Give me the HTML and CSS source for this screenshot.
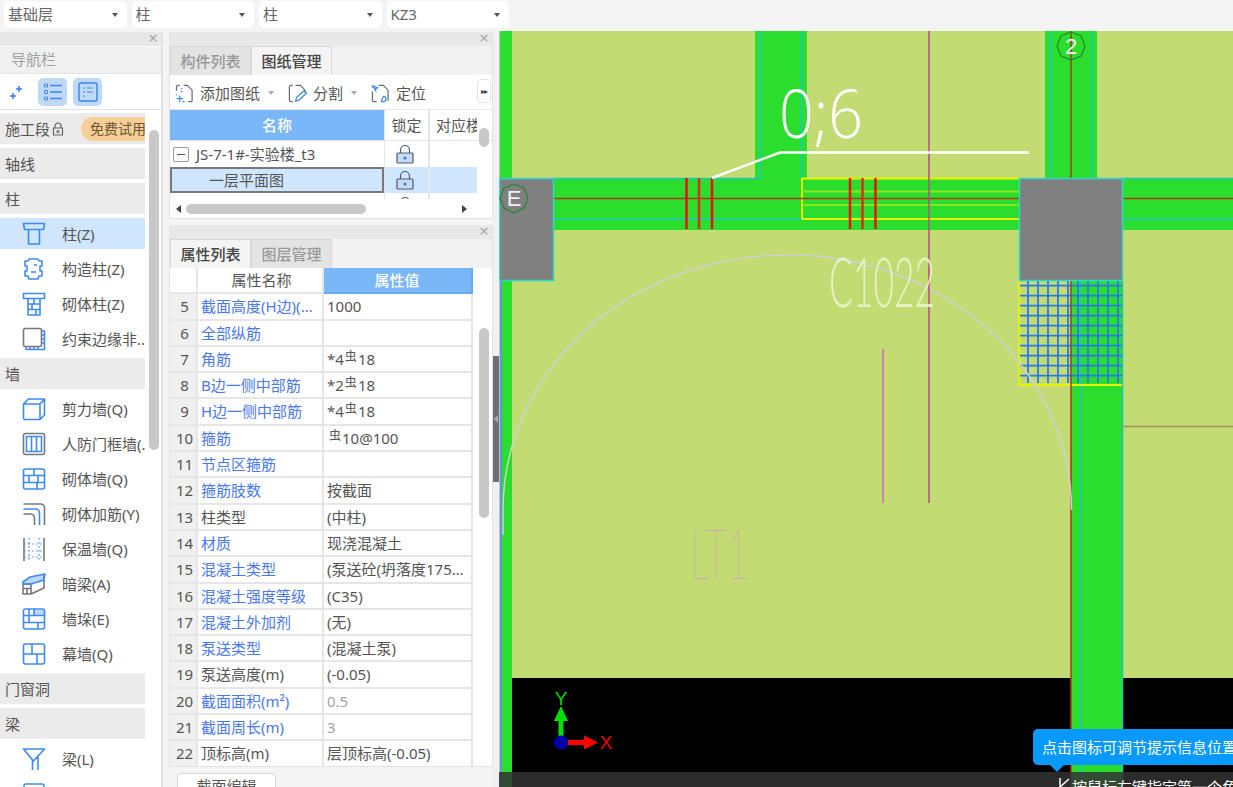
FILE: index.html
```html
<!DOCTYPE html>
<html lang="zh-CN">
<head>
<meta charset="utf-8">
<title>柱</title>
<link rel="stylesheet" href="styles.css">
</head>
<body>
<div class="app">
  <header class="topbar">
    <div class="select s1"><span>基础层</span><i class="caret"></i></div>
    <div class="select s1"><span>柱</span><i class="caret"></i></div>
    <div class="select s1"><span>柱</span><i class="caret"></i></div>
    <div class="select s1"><span>KZ3</span><i class="caret"></i></div>
  </header>
  <main class="main">
    <aside class="nav">
      <div class="strip"><span class="close">×</span></div>
      <div class="nav-title">导航栏</div>
      <div class="nav-tools">
        <svg class="tool-sparkle" viewBox="0 0 16 16"><path d="M10 2v6M7 5h6M4 9v6M1 12h6"/></svg>
        <span class="tool-btn"><svg viewBox="0 0 20 20"><path d="M7 3.500h12M7 10h12M7 16.500h12"/><path class="thin" d="M1.500 2h3v3h-3zM1.500 8.500h3v3h-3zM1.500 15h3v3h-3z"/></svg></span>
        <span class="tool-btn"><svg viewBox="0 0 20 20"><rect x="1" y="1" width="18" height="18" rx="2"/><path class="thin" d="M5 6h2M9 6h6M5 10h2M9 10h6M5 14h2"/></svg></span>
      </div>
      <div class="nav-scroll"></div>
      <div class="nav-list">
        <div class="sec">施工段<svg class="sec-lock" viewBox="0 0 12 14"><path d="M3 6V4a3 3 0 0 1 6 0v2M1.500 6h9v7h-9z"/><circle cx="6" cy="9.500" r="1"/></svg><span class="trial">免费试用</span></div>
        <div class="sec">轴线</div>
        <div class="sec">柱</div>
        <div class="item on"><svg class="ic" viewBox="0 0 24 24"><path d="M1.500 1.500h21l-1 6h-19zM6.500 7.500V22h11V7.500"/></svg>柱(Z)</div>
        <div class="item"><svg class="ic" viewBox="0 0 24 24"><path d="M7 2h9l1 2h3v5h-2v5h2v5h-3l-1 3H7l-1-3H3v-5h2V9H3V4h3zM12 8h3M9 15h5"/></svg>构造柱(Z)</div>
        <div class="item"><svg class="ic" viewBox="0 0 24 24"><path d="M1.500 1.500h21v5h-21zM6 6.500V23h12V6.500M6 12h12M6 17.500h12M12 6.500V12M10 12v5.500M14 17.500V23"/></svg>砌体柱(Z)</div>
        <div class="item"><svg class="ic" viewBox="0 0 24 24"><rect class="gray" x="1.500" y="1.500" width="18" height="18" rx="2"/><path d="M20 4h2.500v18.500H4V20M20 8h2M20 12h2M20 16h2M8 20v2M12 20v2M16 20v2"/></svg>约束边缘非..</div>
        <div class="sec">墙</div>
        <div class="item"><svg class="ic" viewBox="0 0 24 24"><path d="M1.500 7h16.500v15.500H2.500l-1-1zM1.500 7l5-5h16v16l-4.500 4.500M18 7l4.500-5"/></svg>剪力墙(Q)</div>
        <div class="item"><svg class="ic" viewBox="0 0 24 24"><rect class="gray" x="1.500" y="1.500" width="21" height="21" rx="2"/><path d="M4.500 4.500h15v15h-15zM9.500 4.500v15M14.500 4.500v15"/></svg>人防门框墙(.</div>
        <div class="item"><svg class="ic" viewBox="0 0 24 24"><rect x="1.500" y="2" width="21" height="20" rx="2"/><path d="M1.500 8.500h21M1.500 15.500h21M12 2v6.500M7 8.500v7M16 8.500v7M15 15.500V22"/></svg>砌体墙(Q)</div>
        <div class="item"><svg class="ic" viewBox="0 0 24 24"><path class="gray" d="M1.500 2h17a4 4 0 0 1 4 4v17M1.500 12h7a4 4 0 0 1 4 4v7"/><path d="M1.500 7h12a4 4 0 0 1 4 4v12"/></svg>砌体加筋(Y)</div>
        <div class="item"><svg class="ic" viewBox="0 0 24 24"><path class="gray" d="M2 1v23M22 1v23"/><path class="dash" d="M7 1v23M17 1v23M2 7h20M2 14h20M2 20h20"/></svg>保温墙(Q)</div>
        <div class="item"><svg class="ic" viewBox="0 0 24 24"><path class="lightfill" d="M1 10l7-5 15-3-1 6-14 4H1z"/><path class="gray" d="M1 12h8v10H1zM1 16.500h8M5 16.500V22M9 22l13-6V2"/><path d="M1 10l7-5 15-3-1 6-13 4H1z"/></svg>暗梁(A)</div>
        <div class="item"><svg class="ic" viewBox="0 0 24 24"><path class="lightfill" d="M12 3h10v6H12z"/><rect x="1.500" y="2" width="21" height="20" rx="2"/><path d="M1.500 8.500h21M1.500 15.500h21M7 2v13.500M12 2v6.500M16 15.500V22"/></svg>墙垛(E)</div>
        <div class="item"><svg class="ic" viewBox="0 0 24 24"><rect x="1.500" y="2" width="21" height="20" rx="2"/><path d="M1.500 12h21M10 2v10M15 12v10"/></svg>幕墙(Q)</div>
        <div class="sec">门窗洞</div>
        <div class="sec">梁</div>
        <div class="item"><svg class="ic" viewBox="0 0 24 24"><path d="M1.500 2h21l-11 12zM16 8v15M1.500 2l9 11v10"/></svg>梁(L)</div>
        <div class="item"><svg class="ic" viewBox="0 0 24 24"><rect x="2" y="2" width="20" height="20" rx="2"/><path d="M2 8h20"/></svg>连梁(G)</div>
      </div>
    </aside>

    <section class="mid">
      <div class="panel panel-a">
        <div class="strip"><span class="close">×</span></div>
        <div class="tabs">
          <span class="tab off">构件列表</span><span class="tab cur">图纸管理</span>
        </div>
        <div class="toolbar">
          <svg class="tb-ic" viewBox="0 0 20 20"><path class="gray" d="M5 1.500H3a1.500 1.500 0 0 0-1.500 1.500v4M9 1.500h4l5 5v11a1 1 0 0 1-1 1h-3M1.500 11v1M8 18.500h2"/><path d="M5 12v7M1.500 15.500h7"/><path d="M6 5h2M6 8h2"/></svg>
          <span class="tb-label">添加图纸</span><i class="tb-caret"></i>
          <svg class="tb-ic" viewBox="0 0 20 20"><path class="gray" d="M5 1.500H3A1.500 1.500 0 0 0 1.500 3v14A1.500 1.500 0 0 0 3 18.500h2M8 1.500h5l5 5v3"/><path d="M8 18l1-4 8-7 2.500 2.500-8 7.500z"/></svg>
          <span class="tb-label">分割</span><i class="tb-caret"></i>
          <svg class="tb-ic" viewBox="0 0 20 20"><path class="gray" d="M1.500 8v9A1.500 1.500 0 0 0 3 18.500h3M8 1.500h5l5 5v11M1.500 4V3"/><path d="M2 2l5 2-2 1 0 2zM13 13a2.500 2.500 0 1 1 0 5.500h-2v-1z"/></svg>
          <span class="tb-label">定位</span>
          <span class="more">▸▸</span>
        </div>
        <div class="grid-a">
          <div class="ga-head">
            <span class="ga-name">名称</span><span class="ga-lock">锁定</span><span class="ga-floor">对应楼层</span>
          </div>
          <div class="ga-row">
            <div class="ga-cell"><span class="tree-box"></span>JS-7-1#-实验楼_t3</div>
            <div class="ga-lockcell"><svg class="lock" viewBox="0 0 18 20"><path class="shackle" d="M4.500 9V6a4.500 4.500 0 0 1 9 0v3"/><rect x="1" y="9" width="16" height="10" rx="1"/><circle cx="9" cy="14" r="1.600"/></svg></div>
            <div class="ga-blank"></div>
          </div>
          <div class="ga-row sel">
            <div class="ga-cell selcell">一层平面图</div>
            <div class="ga-lockcell"><svg class="lock" viewBox="0 0 18 20"><path class="shackle" d="M4.500 9V6a4.500 4.500 0 0 1 9 0v3"/><rect x="1" y="9" width="16" height="10" rx="1"/><circle cx="9" cy="14" r="1.600"/></svg></div>
            <div class="ga-blank"></div>
          </div>
          <div class="ga-row">
            <div class="ga-cell"></div>
            <div class="ga-lockcell"><svg class="lock" viewBox="0 0 18 20"><path class="shackle" d="M4.500 9V6a4.500 4.500 0 0 1 9 0v3"/><rect x="1" y="9" width="16" height="10" rx="1"/></svg></div>
            <div class="ga-blank"></div>
          </div>
          <div class="ga-vthumb"></div>
        </div>
        <div class="hscroll">
          <i class="arrow-l"></i><span class="hthumb"></span><i class="arrow-r"></i>
        </div>
      </div>

      <div class="panel panel-b">
        <div class="strip"><span class="close">×</span></div>
        <div class="tabs">
          <span class="tab cur">属性列表</span><span class="tab off">图层管理</span>
        </div>
        <div class="props">
          <div class="pr head"><span class="n"></span><span class="k">属性名称</span><span class="v">属性值</span></div>
          <div class="pr"><span class="n">5</span><span class="k link">截面高度(H边)(mm)</span><span class="v">1000</span></div>
          <div class="pr"><span class="n">6</span><span class="k link">全部纵筋</span><span class="v"></span></div>
          <div class="pr"><span class="n">7</span><span class="k link">角筋</span><span class="v">*4<sup class="steel">虫</sup>18</span></div>
          <div class="pr"><span class="n">8</span><span class="k link">B边一侧中部筋</span><span class="v">*2<sup class="steel">虫</sup>18</span></div>
          <div class="pr"><span class="n">9</span><span class="k link">H边一侧中部筋</span><span class="v">*4<sup class="steel">虫</sup>18</span></div>
          <div class="pr"><span class="n">10</span><span class="k link">箍筋</span><span class="v"><sup class="steel lead">虫</sup>10@100</span></div>
          <div class="pr"><span class="n">11</span><span class="k link">节点区箍筋</span><span class="v"></span></div>
          <div class="pr"><span class="n">12</span><span class="k link">箍筋肢数</span><span class="v">按截面</span></div>
          <div class="pr"><span class="n">13</span><span class="k">柱类型</span><span class="v">(中柱)</span></div>
          <div class="pr"><span class="n">14</span><span class="k link">材质</span><span class="v">现浇混凝土</span></div>
          <div class="pr"><span class="n">15</span><span class="k link">混凝土类型</span><span class="v">(泵送砼(坍落度175~190mm))</span></div>
          <div class="pr"><span class="n">16</span><span class="k link">混凝土强度等级</span><span class="v">(C35)</span></div>
          <div class="pr"><span class="n">17</span><span class="k link">混凝土外加剂</span><span class="v">(无)</span></div>
          <div class="pr"><span class="n">18</span><span class="k link">泵送类型</span><span class="v">(混凝土泵)</span></div>
          <div class="pr"><span class="n">19</span><span class="k">泵送高度(m)</span><span class="v">(-0.05)</span></div>
          <div class="pr"><span class="n">20</span><span class="k link">截面面积(m²)</span><span class="v muted">0.5</span></div>
          <div class="pr"><span class="n">21</span><span class="k link">截面周长(m)</span><span class="v muted">3</span></div>
          <div class="pr"><span class="n">22</span><span class="k">顶标高(m)</span><span class="v">层顶标高(-0.05)</span></div>
          <div class="props-thumb"></div>
        </div>
      </div>
      <div class="btn-row"><button class="btn">截面编辑</button></div>
    </section>

    <div class="splitter"><span class="grip"><i></i></span></div>

    <section class="canvas">
      <svg class="cad" viewBox="499 31 734 756" width="734" height="756">
        <rect x="499" y="31" width="734" height="756" fill="#c2dc73"/>
        <rect x="512" y="678" width="721" height="109" fill="#000"/>
        <!-- walls -->
        <g fill="#2bde2e">
          <rect x="499" y="31" width="13" height="756"/>
          <rect x="755" y="31" width="52" height="147"/>
          <rect x="553" y="178" width="466" height="52"/>
          <rect x="1045" y="31" width="52" height="147"/>
          <rect x="1122" y="178" width="111" height="52"/>
          <rect x="1071" y="281" width="51" height="506"/>
        </g>
        <rect x="499" y="31" width="1" height="756" fill="#c4c4c4"/>
        <path d="M501 281V787" stroke="#5a9ad0" stroke-width="2"/>
        <!-- wall edges -->
        <g fill="none" stroke="#1fc6c0" stroke-width="1.500">
          <path d="M553 178.500H760.500V31"/>
          <path d="M801.500 31V178"/>
          <path d="M553 219H802"/>
          <path d="M1050.500 31V178M1092 31V178"/>
          <path d="M1122 178.500H1233M1122 219.500H1233"/>
          <path d="M1081 281V787M1122.500 281V787"/>
        </g>
        <!-- hatch -->
        <g fill="none" stroke="#e8f200" stroke-width="2">
          <path d="M802 178.500H1019M802 219H1019M802 178V219"/>
          <path d="M802 191.500H1019M802 205H1019" stroke="#86e81c"/>
          <path d="M1019.500 281V385H1122"/>
        </g>
        <g stroke="#2a78f0" stroke-width="1.800">
          <path d="M1028 281V383M1038 281V383M1048 281V383M1058 281V383M1068 281V383M1078 281V383M1088 281V383M1098 281V383M1108 281V383M1118 281V383"/>
          <path d="M1020 285.700H1122M1020 295.700H1122M1020 305.700H1122M1020 315.700H1122M1020 325.700H1122M1020 335.700H1122M1020 345.700H1122M1020 355.700H1122M1020 365.700H1122M1020 375.700H1122"/>
        </g>
        <!-- axes -->
        <g fill="none" stroke="#ad3a12" stroke-width="1.500">
          <path d="M553 198.500H1019M1122 198.500H1233"/>
          <path d="M1071 31V178M1071 281V787"/>
        </g>
        <path d="M686.500 178V229M712 178V229M850 178V229M875.500 178V229" stroke="#f40d0d" stroke-width="2.500"/>
        <path d="M699 178V229M862.500 178V229" stroke="#e52a14" stroke-width="2.500"/>
        <!-- columns -->
        <rect x="499.500" y="178.500" width="54" height="102" fill="#808080" stroke="#2fd6d0" stroke-width="1.500"/>
        <rect x="1019.500" y="178.500" width="103" height="102" fill="#808080" stroke="#2fd6d0" stroke-width="1.500"/>
        <!-- CAD annotations -->
        <path class="arc" d="M503 535V510A284 255 0 0 1 1071.500 510"/>
        <path d="M883 349V503" stroke="#d068b4" stroke-width="1.500"/>
        <path d="M929 31V503" stroke="#b8488a" stroke-width="1.500"/>
        <path d="M1123 426.500H1233" stroke="#a98e55" stroke-width="1.500"/>
        <path d="M712 178L780 152.500H1029" fill="none" stroke="#fff" stroke-width="2.500"/>
        <text class="cad-big" x="779" y="138" textLength="84" lengthAdjust="spacingAndGlyphs">0;6</text>
        <text class="cad-c" x="829" y="307" textLength="106" lengthAdjust="spacingAndGlyphs">C1022</text>
        <text class="cad-lt" x="690" y="579" textLength="59" lengthAdjust="spacingAndGlyphs">LT1</text>
        <!-- grid bubbles -->
        <polygon class="bubble" points="514,184 524,188 528,198 524,208 514,213 504,208 500,198 504,188"/>
        <text class="bubble-t" x="514" y="206">E</text>
        <polygon class="bubble" points="1071,32 1081,36 1085,46 1081,56 1071,60 1061,56 1057,46 1061,36"/>
        <text class="bubble-t" x="1071" y="54">2</text>
        <!-- UCS -->
        <path d="M561 742V719" stroke="#00e000" stroke-width="5"/>
        <polygon points="561,706 554,721 568,721" fill="#00e000"/>
        <path d="M561 742.500H585" stroke="#ff0000" stroke-width="5"/>
        <polygon points="598,742.500 584,735.500 584,749.500" fill="#ff0000"/>
        <circle cx="561" cy="742.500" r="7" fill="#0000a8"/>
        <text class="ucs ucs-y" x="561" y="705">Y</text>
        <text class="ucs ucs-x" x="606" y="749">X</text>
        <rect x="499" y="772" width="734" height="15" fill="#333" fill-opacity=".85"/>
        <path d="M1060 787V778M1060 787L1069 779" stroke="#fff" stroke-width="1.500" fill="none"/>
      </svg>
      <div class="status">按鼠标左键指定第一个角点</div>
      <div class="tip">点击图标可调节提示信息位置</div>
    </section>
  </main>
</div>
</body>
</html>
```
FILE: styles.css
```css
* { box-sizing: border-box; }
html, body { margin: 0; height: 100%; }
body {
  width: 1233px;
  height: 787px;
  overflow: hidden;
  background: #f4f4f4;
  color: #555;
  font: 15px/1.2 "Noto Sans", "Noto Sans CJK SC", sans-serif;
}
.app { height: 787px; display: flex; flex-direction: column; overflow: hidden; }

/* top selectors */
.topbar { height: 31px; flex: none; display: flex; gap: 5px; padding: 1px 0 0 4px; }
.select {
  width: 122.500px; height: 27px; background: #fff; border-radius: 5px;
  display: flex; align-items: center; justify-content: space-between;
  padding: 0 9px 2px 4px; color: #666;
}
.caret { width: 0; height: 0; border: 3px solid transparent; border-top: 4px solid #555; border-bottom: 0; margin-top: 2px; }

.main { flex: 1; display: flex; min-height: 0; }

/* shared strip */
.strip { height: 14px; background: #e8e8e8; position: relative; flex: none; }
.close { position: absolute; right: 3px; top: -3px; font-size: 17px; line-height: 17px; color: #a8a8a8; }

/* left navigation */
.nav { width: 163px; flex: none; margin-top: 1px; background: #fff; position: relative; overflow: hidden; border-right: 2px solid #e2e2e2; }
.nav-title { height: 27px; background: #f0f0f0; border-bottom: 1px solid #e3e3e3; margin-top: 1px; padding: 3px 0 0 11px; color: #a0a0a0; font-size: 15px; }
.nav-tools { height: 36px; display: flex; align-items: center; padding-left: 9px; border-bottom: 1px solid #e3e3e3; }
.tool-sparkle { width: 16px; height: 16px; margin-right: 13px; fill: none; stroke: #2f80f0; stroke-width: 1.500; }
.tool-btn { width: 29px; height: 28px; background: #bfd9f5; border-radius: 5px; display: flex; align-items: center; justify-content: center; margin-right: 6px; }
.tool-btn svg { width: 20px; height: 20px; fill: none; stroke: #3b86e8; stroke-width: 1.500; }
.tool-btn .thin { stroke-width: 1; }
.nav-list { padding-top: 3px; width: 145px; display: flex; flex-direction: column; gap: 4px; }
.sec { height: 31px; flex: none; background: #ebebeb; display: flex; align-items: center; padding-left: 5px; white-space: nowrap; overflow: hidden; }
.sec-lock { width: 12px; height: 14px; margin-left: 2px; fill: none; stroke: #666; stroke-width: 1.200; flex: none; }
.trial { flex: none; margin-left: 17px; background: #f5cf95; border-radius: 12px 0 0 12px; padding: 0 0 0 9px; height: 24px; line-height: 23px; font-size: 14px; color: #6b5536; width: 70px; overflow: hidden; }
.item { height: 31px; flex: none; display: flex; align-items: center; padding-left: 22px; white-space: nowrap; overflow: hidden; }
.item.on { background: #d0e6ff; }
.ic { width: 24px; height: 24px; margin-right: 16px; flex: none; fill: none; stroke: #3d8bf2; stroke-width: 1.600; stroke-linejoin: round; }
.ic .gray { stroke: #75787f; }
.ic .dash { stroke-dasharray: 1.500 2.500; stroke-width: 1.200; }
.ic .lightfill { fill: #bcdafb; stroke: none; }
.nav-scroll { position: absolute; left: 149px; top: 98px; width: 10px; height: 320px; background: #c8c8c8; border-radius: 5px; }

/* middle column */
.mid { width: 324px; flex: none; margin-left: 6px; margin-top: 1px; display: flex; flex-direction: column; overflow: hidden; }
.panel { background: #fff; display: flex; flex-direction: column; flex: none; }
.panel-a { height: 187px; border: 1px solid #e3e3e3; border-top: 0; }
.panel-b { margin-top: 6px; height: 542px; border: 1px solid #e3e3e3; border-top: 0; }
.tabs { height: 29px; flex: none; background: #f2f2f2; display: flex; }
.tab { width: 81px; text-align: center; line-height: 28px; border: 1px solid #d8d8d8; border-bottom: 0; font-weight: 500; }
.tab.off { background: #e4e4e4; color: #999; }
.tab.cur { background: #f4f4f4; color: #444; margin-left: 0; }

.toolbar { height: 34px; flex: none; display: flex; align-items: center; padding: 2px 0 0 5px; position: relative; }
.tb-ic { width: 19px; height: 19px; flex: none; fill: none; stroke: #3d8bf2; stroke-width: 1.300; }
.tb-ic .gray { stroke: #666c75; }
.tb-label { margin-left: 6px; color: #555; white-space: nowrap; }
.tb-caret { width: 0; height: 0; margin: 0 14px 0 8px; border: 3px solid transparent; border-top: 4px solid #aaa; border-bottom: 0; }
.more { position: absolute; left: 307px; top: 4px; width: 14px; height: 24px; border: 1px solid #e3e3e3; border-radius: 4px; background: #fff; font-size: 8px; line-height: 22px; text-align: center; letter-spacing: -1px; color: #444; }

.grid-a { height: 90px; flex: none; position: relative; overflow: hidden; border-top: 1px solid #e6e6e6; width: 322px; }
.ga-head { height: 31px; display: flex; border-bottom: 1px solid #e6e6e6; }
.ga-name { width: 214px; background: #7ab7f8; color: #fff; text-align: center; line-height: 30px; font-weight: 500; }
.ga-lock { width: 44px; text-align: center; line-height: 30px; border-left: 1px solid #e6e6e6; color: #555; }
.ga-floor { width: 49px; padding-left: 6px; line-height: 30px; border-left: 2px solid #e6e6e6; overflow: hidden; white-space: nowrap; color: #555; }
.ga-row { height: 26px; display: flex; width: 307px; }
.ga-cell { width: 214px; display: flex; align-items: center; padding-left: 3px; color: #555; white-space: nowrap; }
.tree-box { width: 16px; height: 15px; border: 1px solid #999; border-radius: 2px; margin-right: 7px; position: relative; flex: none; }
.tree-box::after { content: ""; position: absolute; left: 3px; right: 3px; top: 6px; height: 1px; background: #555; }
.ga-row.sel { background: #d0e6ff; }
.selcell { border: 2px solid #7a7a7a; padding-left: 37px; height: 26px; }
.ga-lockcell { width: 44px; display: flex; justify-content: center; align-items: center; border-left: 1px solid #e6e6e6; padding: 0 3px 1px 0; }
.ga-blank { width: 49px; border-left: 2px solid #e6e6e6; }
.lock { width: 18px; height: 20px; fill: #c6daf5; stroke: #4f5a6c; stroke-width: 1.200; }
.lock circle { fill: #2f80e0; stroke: none; }
.lock .shackle { fill: none; }
.ga-vthumb { position: absolute; left: 309px; top: 18px; width: 10px; height: 19px; background: #c8c8c8; border-radius: 5px; }
.hscroll { flex: 1; display: flex; align-items: center; padding-left: 6px; background: #fff; position: relative; }
.hthumb { width: 180px; height: 10px; background: #c8c8c8; border-radius: 5px; margin-left: 5px; }
.arrow-l { width: 0; height: 0; border: 4px solid transparent; border-right: 5px solid #444; border-left: 0; }
.arrow-r { width: 0; height: 0; border: 4px solid transparent; border-left: 5px solid #444; border-right: 0; margin-left: 96px; }

.props { position: relative; flex: 1; width: 322px; overflow: hidden; }
.pr { height: 26.300px; display: flex; }
.pr > span { display: block; border-bottom: 2px solid #e6e6e6; border-right: 2px solid #e6e6e6; line-height: 24px; white-space: nowrap; overflow: hidden; text-overflow: ellipsis; }
.n { width: 28px; flex: none; background: #f0f0f0; text-align: center; color: #555; padding-left: 3px; }
.k { width: 126px; flex: none; padding-left: 3px; color: #555; }
.k.link { color: #4a78ee; }
.v { width: 149px; flex: none; padding: 0 4px 0 3px; color: #555; }
.v.muted { color: #a5a5a5; }
.head .n { background: #fff; }
.head .k { text-align: center; }
.head .v { background: #7ab7f8; color: #fff; text-align: center; border-color: #6aaaf0; font-weight: 500; }
.steel { font-size: 12px; line-height: 0; vertical-align: 4px; margin: 0 1px; color: #555; }
.steel.lead { margin-left: 2px; }
.props-thumb { position: absolute; left: 309px; top: 60px; width: 10px; height: 190px; background: #c8c8c8; border-radius: 5px; }
.btn-row { padding: 6px 0 0 8px; flex: none; }
.btn { width: 99px; height: 30px; padding: 0 0 4px; background: #fff; border: 1px solid #d6d6d6; border-radius: 4px; color: #555; font: inherit; }

/* splitter */
.splitter { width: 6px; flex: none; position: relative; background: #f0f0f0; }
.grip { position: absolute; left: 0; top: 325px; width: 6px; height: 126px; background: #6c7076; display: flex; align-items: center; }
.grip i { width: 0; height: 0; border: 4px solid transparent; border-right: 4px solid #a8acb2; border-left: 0; margin-left: 1px; }

/* drawing canvas */
.canvas { flex: 1; position: relative; overflow: hidden; background: #c2dc73; }
.cad { display: block; }
.arc { fill: none; stroke: #d0d0d0; stroke-width: 1.500; }
.cad-big, .cad-c, .cad-lt { font-family: "Lato", "Open Sans", sans-serif; }
.cad-big { font-size: 66px; fill: #fff; font-family: "Open Sans", sans-serif; font-weight: 300; }
.cad-c { font-size: 68px; fill: #eef4cf; font-weight: 300; fill-opacity: .85; }
.cad-lt { font-size: 70px; fill: #d98fd0; font-weight: 100; }
.bubble { fill: none; stroke: #1f8a2e; stroke-width: 1.300; }
.bubble-t { font: 22px "Liberation Sans", sans-serif; fill: #f2f2f2; text-anchor: middle; }
.ucs { font: 19px "Liberation Sans", sans-serif; text-anchor: middle; }
.ucs-y { fill: #00d800; }
.ucs-x { fill: #f00000; }
.status { position: absolute; left: 573px; top: 747px; color: #fff; font-size: 15px; white-space: nowrap; }
.tip { position: absolute; left: 534px; top: 698px; width: 240px; height: 36px; padding-left: 9px; background: #0899ff; border-radius: 5px 0 0 5px; color: #fff; line-height: 36px; white-space: nowrap; overflow: hidden; }
.canvas::after { content: ""; position: absolute; left: 551px; top: 734px; border: 7px solid transparent; border-top: 7px solid #0899ff; border-bottom: 0; }
```
